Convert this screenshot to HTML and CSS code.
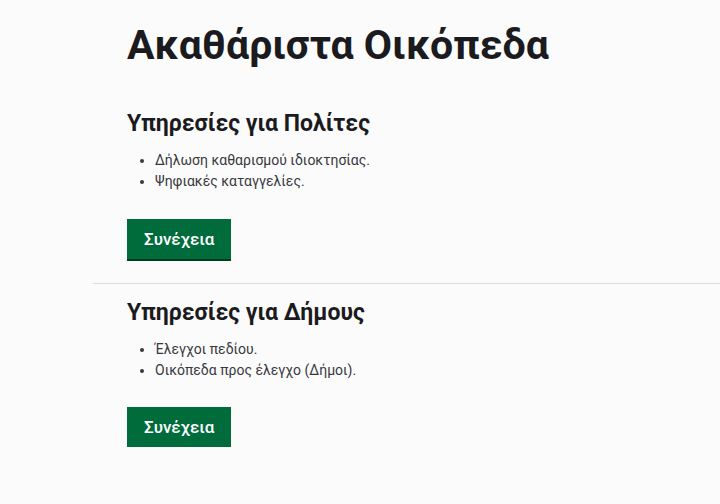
FILE: index.html
```html
<!DOCTYPE html>
<html lang="el">
<head>
  <meta charset="UTF-8">
  <meta name="viewport" content="width=device-width, initial-scale=1">
  <title>Ακαθάριστα Οικόπεδα</title>
  <link rel="stylesheet" href="styles.css">
</head>
<body>
  <main class="wrapper">
    <h1 class="page-title">Ακαθάριστα Οικόπεδα</h1>

    <!-- Citizens -->
    <section class="service">
      <h2>Υπηρεσίες για Πολίτες</h2>
      <ul>
        <li>Δήλωση καθαρισμού ιδιοκτησίας.</li>
        <li>Ψηφιακές καταγγελίες.</li>
      </ul>
      <a class="btn" href="#">Συνέχεια</a>
    </section>

    <hr class="divider">

    <!-- Municipalities -->
    <section class="service second">
      <h2>Υπηρεσίες για Δήμους</h2>
      <ul>
        <li>Έλεγχοι πεδίου.</li>
        <li>Οικόπεδα προς έλεγχο (Δήμοι).</li>
      </ul>
      <a class="btn" href="#">Συνέχεια</a>
    </section>
  </main>
</body>
</html>
```

FILE: styles.css
```css
body {
  font-family: Roboto, 'Noto Sans', sans-serif;
  background: #fbfbfb;
  color: #1b1b1f;
  margin: 0;
  padding: 0;
}

.wrapper {
  margin-left: 93px;
  padding-top: 20px;
}

.page-title {
  margin: 0 0 0 34px;
  font-size: 41px;
  line-height: 50px;
  font-weight: 700;
}

.service {
  padding: 0 34px;
}

.service h2 {
  margin: 39px 0 0;
  font-size: 23px;
  line-height: 30px;
  font-weight: 700;
}

.second h2 {
  margin-top: 14px;
}

.service ul {
  margin: 11px 0 0;
  padding-left: 28px;
  font-size: 14px;
  line-height: 21px;
  color: #38383d;
}

.btn {
  display: inline-block;
  margin-top: 27px;
  padding: 0 17px;
  height: 40px;
  line-height: 40px;
  background: #006c3b;
  color: #fff;
  font-size: 17px;
  font-weight: 500;
  text-decoration: none;
  box-shadow: 0 2px 0 #003a1f;
}

.second .btn {
  margin-top: 26px;
}

.divider {
  border: none;
  border-top: 1px solid #dcdcdc;
  margin: 24px 0 0;
}
```
